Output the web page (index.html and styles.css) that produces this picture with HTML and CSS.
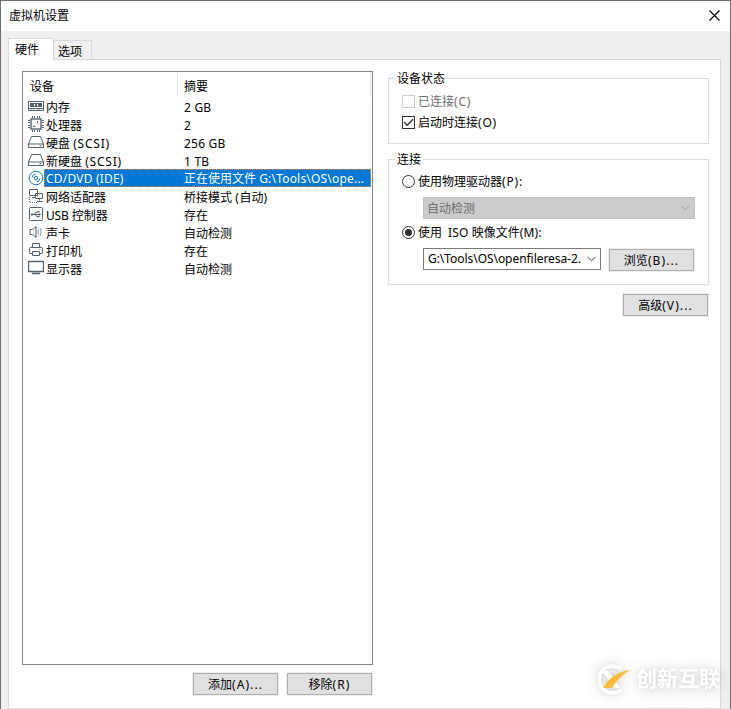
FILE: index.html
```html
<!DOCTYPE html>
<html lang="zh-CN">
<head>
<meta charset="utf-8">
<title>虚拟机设置</title>
<link rel="stylesheet" href="styles.css">
</head>
<body>
<div class="window">
  <header class="titlebar">
    <span class="title">虚拟机设置</span>
    <svg class="close" width="11" height="11" viewBox="0 0 11 11"><path d="M.5 .5l10 10M10.500 .5l-10 10" stroke="#000" stroke-width="1.150" fill="none"/></svg>
  </header>
  <nav class="tabs"><div class="tab active">硬件</div><div class="tab">选项</div></nav>
  <main class="page">
    <section class="left">
      <div class="list">
        <div class="head"><div class="name">设备</div><div class="sum">摘要</div></div>
        <div class="row"><svg class="ico" viewBox="0 0 16 16"><path d="M0 3.500h16M.5 4v8.500h15V4M0 10.500h16"/><path d="M2 5h12v4H2z" fill="#53626c" stroke="none"/><path d="M6.500 6v2M9.500 6v2" stroke="#fff"/><path d="M3 12h4M9 12h4" stroke-dasharray="1 1"/></svg><span class="label">内存</span><span class="val"><i>2 GB</i></span></div>
        <div class="row"><svg class="ico" viewBox="0 0 16 16"><rect x="3" y="3" width="10" height="10" stroke-width="1.400"/><path d="M4.500 0v2M6.500 0v2M9.500 0v2M11.500 0v2M4.500 14v2M6.500 14v2M9.500 14v2M11.500 14v2M0 4.500h2M0 6.500h2M0 9.500h2M0 11.500h2M14 4.500h2M14 6.500h2M14 9.500h2M14 11.500h2M9.500 5v2M5 10.500h2"/></svg><span class="label">处理器</span><span class="val"><i>2</i></span></div>
        <div class="row"><svg class="ico" viewBox="0 0 16 16"><path d="M3.500 2.500h9l3 7.500v3.500H.5V10zM.5 10h15M11.500 11.800h2"/></svg><span class="label">硬盘 <i class="wide">(SCSI)</i></span><span class="val"><i>256 GB</i></span></div>
        <div class="row"><svg class="ico" viewBox="0 0 16 16"><path d="M3.500 2.500h9l3 7.500v3.500H.5V10zM.5 10h15M11.500 11.800h2"/></svg><span class="label">新硬盘 <i class="wide">(SCSI)</i></span><span class="val"><i>1 TB</i></span></div>
        <div class="row selected"><svg class="ico disc" viewBox="0 0 16 16"><circle cx="8" cy="8" r="6.800"/><circle cx="8" cy="8" r="1.800"/><path d="M4 7.500Q4.500 4.500 7.500 4M12 8.500Q11.500 11.500 8.500 12"/></svg><div class="bar"><span class="label"><i>CD/DVD (IDE)</i></span><span class="val">正在使用文件 <i>G:\Tools\OS\ope...</i></span></div></div>
        <div class="row"><svg class="ico" viewBox="0 0 16 16"><path d="M1.500 1.500h8v6h-8zM4 9.500h3M7.500 5.500h7v5h-7zM11.500 10.500v2M9 13.500h5.500" fill="#fff"/><path d="M1.500 9v5.500H9" stroke-dasharray="1 1"/></svg><span class="label">网络适配器</span><span class="val">桥接模式 <i class="wide">(</i>自动<i class="wide">)</i></span></div>
        <div class="row"><svg class="ico" viewBox="0 0 16 16"><rect x="1.500" y="1.500" width="13" height="13" rx="1"/><path d="M4 8.500h8M6 8.500l2-2.500h2M7 8.500l1.500 2h1.500"/><path d="M3 7.500h2v2H3zM10 5h1.500v1.500H10zM10 10h1.500v1.500H10zM11 7l2 1.500-2 1.500z" fill="#53626c" stroke="none"/></svg><span class="label"><i class="usb">USB</i> 控制器</span><span class="val">存在</span></div>
        <div class="row"><svg class="ico" viewBox="0 0 16 16"><path d="M2 5.500h2.500l3.500-3v11l-3.500-3H2z"/><path d="M10 5.500q1.500 2.500 0 5M12 4q2.500 4 0 8" stroke="#8b969d"/></svg><span class="label">声卡</span><span class="val">自动检测</span></div>
        <div class="row"><svg class="ico" viewBox="0 0 16 16"><path d="M4.500 5.500v-4h7v4M4.500 11.500H2q-.5 0-.5-1V6.500q0-1 1-1h11q1 0 1 1v4q0 1-.5 1h-2.500M4.500 9.500h7v4h-7zM11.500 7.500h1"/></svg><span class="label">打印机</span><span class="val">存在</span></div>
        <div class="row"><svg class="ico" viewBox="0 0 16 16"><path d="M.5 1.500h15v10H.5zM4 13.500h8" stroke-width="1.300"/></svg><span class="label">显示器</span><span class="val">自动检测</span></div>
      </div>
      <div class="actions"><button>添加<i>(A)...</i></button><button>移除<i>(R)</i></button></div>
    </section>
    <section class="right">
      <div class="group status">
        <span class="legend">设备状态</span>
        <label class="opt off"><span class="box"></span>已连接<i class="wide">(C)</i></label>
        <label class="opt"><span class="box"><svg viewBox="0 0 11 11" width="11" height="11"><path d="M1 5l3.200 3.200L10 2.300" fill="none" stroke="#333" stroke-width="1.400"/></svg></span>启动时连接<i class="wide">(O)</i></label>
      </div>
      <div class="group conn">
        <span class="legend">连接</span>
        <label class="opt"><span class="radio"></span>使用物理驱动器<i class="wide">(P):</i></label>
        <div class="combo disabled"><span class="ctext">自动检测</span><svg class="chev" viewBox="0 0 9 6"><path d="M.5 .8l4 4 4-4"/></svg></div>
        <label class="opt"><span class="radio on"></span>使用<i class="iso">ISO</i>映像文件<i>(M):</i></label>
        <div class="pair">
          <div class="combo"><span class="ctext"><i class="path">G:\Tools\OS\openfileresa-2.</i></span><svg class="chev" viewBox="0 0 9 6"><path d="M.5 .8l4 4 4-4"/></svg></div>
          <button>浏览<i>(B)...</i></button>
        </div>
      </div>
      <button class="advanced">高级<i>(V)...</i></button>
    </section>
  </main>
  <div class="watermark">
    <svg width="36" height="36" viewBox="0 0 36 36"><path d="M27 8A13.500 13.500 0 1 0 27 29" fill="none" stroke="#fff" stroke-width="3.500"/><path d="M8 10h6l12 17h-6z" fill="#fff"/><path d="M9 27Q18 11 37 8.500 25 15 18 27z" fill="#f8bd38"/></svg>
    <div class="brand"><b>创新互联</b><svg class="sub" width="88" height="7"><text x="0" y="5.500" textLength="85" lengthAdjust="spacingAndGlyphs">CHUANG XIN HU LIAN</text></svg></div>
  </div>
</div>
</body>
</html>
```
FILE: styles.css
```css
* { box-sizing: border-box; }
body { margin: 0; font: 12px/18px "Noto Sans", "Noto Sans CJK SC", sans-serif; color: #000; overflow: hidden; }
i { font-style: normal; letter-spacing: .2px; }
.wide { letter-spacing: .8px; }
.usb { letter-spacing: -.2px; }
.window { position: relative; width: 731px; height: 709px; display: flex; flex-direction: column; background: #efefef; border: 1px solid #6d6d6d; border-bottom: 0; }
.titlebar { height: 30px; flex: none; display: flex; align-items: center; justify-content: space-between; padding: 0 10px 0 8px; background: #fff; }
.close { display: block; margin-top: -2px; }
.tabs { height: 28px; flex: none; display: flex; align-items: flex-end; padding-left: 7px; }
.tab { width: 38px; height: 19px; padding: 2px 0 0 4px; border: 1px solid #d9d9d9; border-width: 1px 1px 0 0; line-height: 17px; background: #f0f0f0; }
.tab.active { position: relative; width: 46px; height: 22px; margin-bottom: -1px; padding: 2px 0 0 6px; border-left-width: 1px; background: #fff; }
.page { width: 713px; height: 650px; flex: none; margin-left: 7px; display: flex; border: 1px solid #d9d9d9; background: #fff; padding: 11px 11px 0 13px; }
.left { width: 351px; flex: none; }
.list { height: 594px; border: 1px solid #828790; }
.head { height: 25px; display: flex; padding: 1px 0 0 7px; line-height: 27px; }
.name { width: 148px; border-right: 1px solid #e5e5e5; }
.sum { flex: 1; padding-left: 6px; border-right: 1px solid #e5e5e5; margin-right: 1px; }
.row { height: 18px; display: flex; padding-left: 5px; line-height: 21px; white-space: nowrap; }
.ico { width: 16px; height: 16px; flex: none; margin: 1px 1px 0 0; fill: none; stroke: #53626c; stroke-width: 1; }
.disc { stroke: #1874a8; margin-right: 0; }
.label { width: 139px; flex: none; padding-left: 1px; }
.bar { display: flex; flex: 1; margin-right: 1px; height: 18px; line-height: 18px; color: #fff; background: #0078d7; border: 1px dotted #ff8728; }
.actions { display: flex; justify-content: flex-end; gap: 9px; margin-top: 8px; padding-right: 1px; }
button { width: 85px; height: 22px; flex: none; padding: 1px 0 0; font: inherit; line-height: 20px; color: #000; background: #e1e1e1; border: 1px solid #adadad; box-shadow: 0 0 0 1px #f0f0f0; }
button i { letter-spacing: 1.100px; }
.right { width: 321px; margin: 7px 0 0 15px; display: flex; flex-direction: column; }
.group { position: relative; border: 1px solid #dcdcdc; }
.status { height: 66px; padding: 13px 0 0 13px; }
.conn { height: 126px; margin-top: 15px; padding: 12px 0 0 13px; }
.legend { position: absolute; left: 6px; top: -9px; padding: 0 2px; background: #fff; }
.opt { display: flex; align-items: center; height: 18px; padding-top: 2px; white-space: pre; }
.status .opt + .opt { margin-top: 3px; }
.off { color: #6d6d6d; }
.box, .radio { width: 13px; height: 13px; flex: none; margin: 0 3px 2px 0; border: 1px solid #333; background: #fff; }
.box svg { display: block; }
.off .box { border-color: #ccc; }
.radio { border-radius: 50%; }
.on { background: radial-gradient(circle, #333 0 3.300px, #fff 4px); }
.iso { margin: 0 3px 0 6px; }
.combo { width: 178px; height: 22px; display: flex; align-items: center; border: 1px solid #7a7a7a; padding: 0 4px; background: #fff; }
.path { letter-spacing: -.050px; }
.ctext { flex: 1; white-space: nowrap; }
.combo:not(.disabled) .ctext { margin-top: -1px; }
.chev { width: 9px; height: 6px; flex: none; fill: none; stroke: #444; }
.disabled { width: 272px; margin: 7px 0 4px 21px; color: #6d6d6d; background: #ccc; border-color: #bfbfbf; padding: 0 4px 0 3px; }
.disabled .ctext { padding-top: 2px; }
.disabled .chev { stroke: #a0a0a0; }
.pair { display: flex; gap: 8px; align-items: center; margin: 7px 0 0 21px; }
.pair button { position: relative; top: 1px; }
.advanced { align-self: flex-end; margin: 9px 1px 0 0; }
.watermark { position: absolute; left: 593px; top: 660px; display: flex; gap: 6px; color: #fff; filter: drop-shadow(0 0 7px rgba(0,0,0,.18)) drop-shadow(0 0 2px rgba(0,0,0,.08)); }
.brand { padding-top: 4px; }
.brand b { display: block; font: bold 21px/24px "Noto Sans CJK SC", sans-serif; }
.sub { display: block; margin-top: 2px; fill: #fff; font: 6px "Noto Sans", sans-serif; }
```
